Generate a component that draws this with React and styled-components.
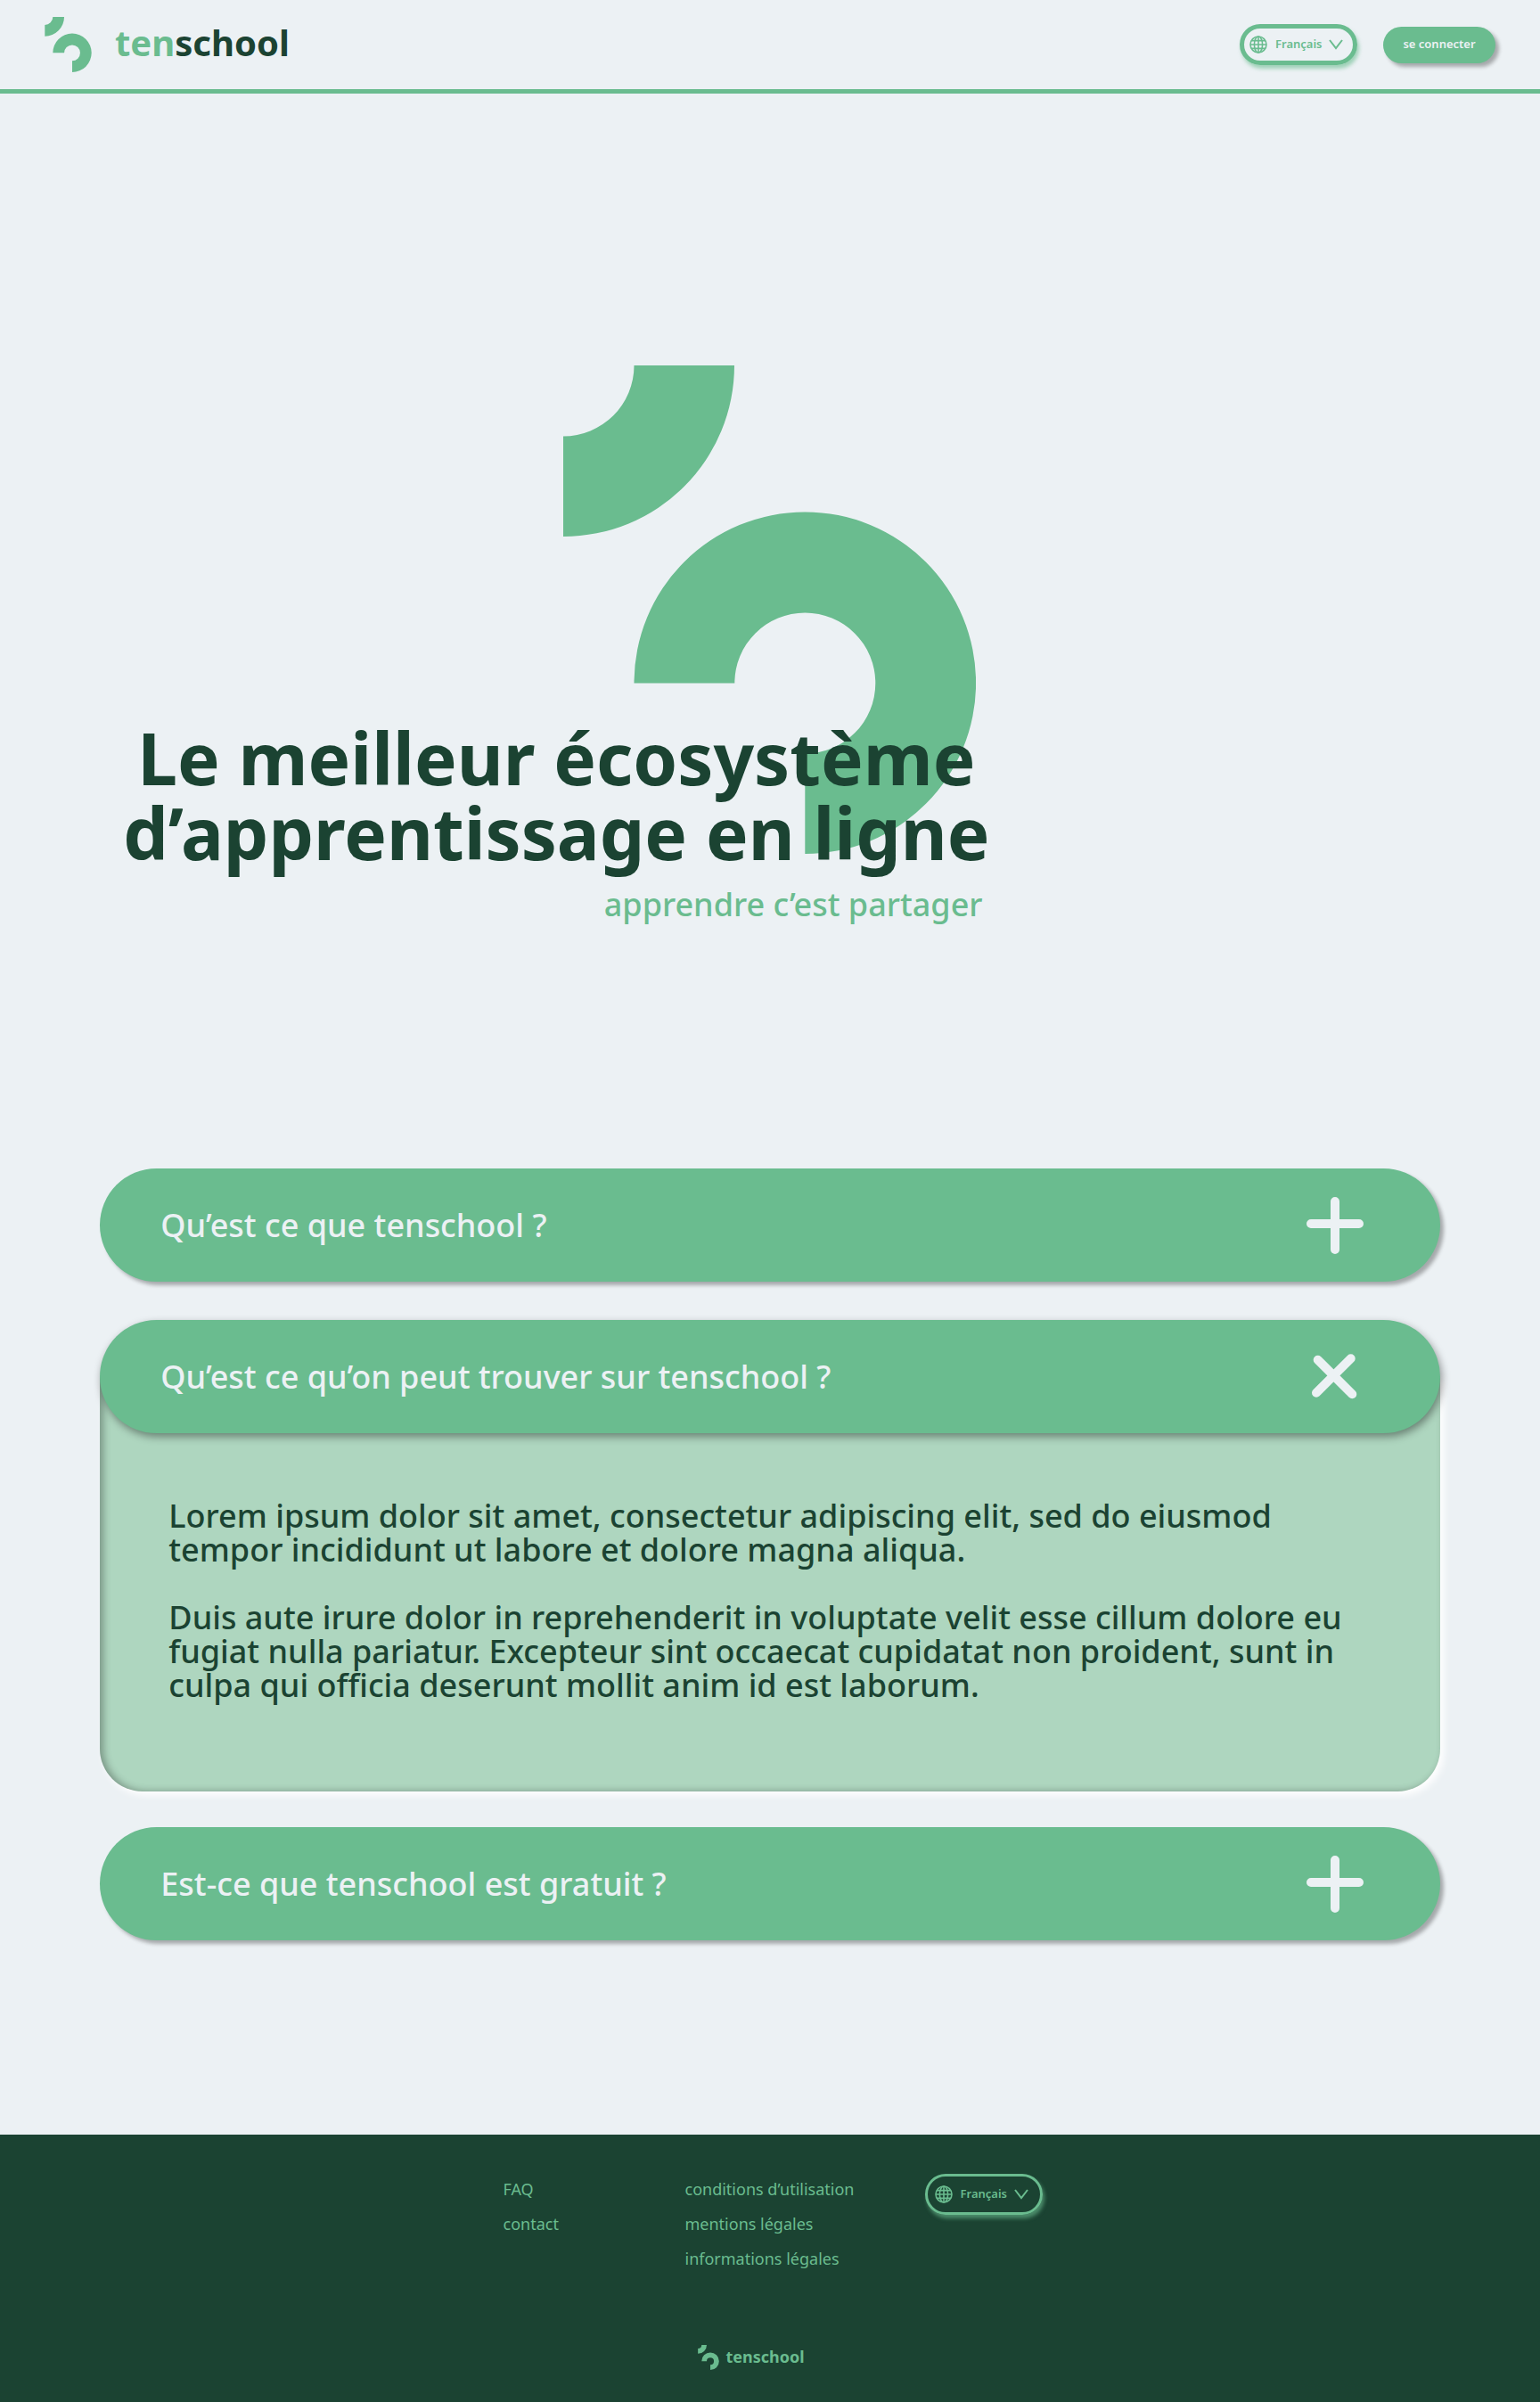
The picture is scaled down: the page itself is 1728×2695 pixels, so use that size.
import React, { useState } from "react";
import styled, { createGlobalStyle } from "styled-components";

const color = {
  page: "#ecf1f4",
  green: "#6abc8f",
  pale: "#aed6bf",
  dark: "#1b4332",
};

const GlobalStyle = createGlobalStyle`
  *, *::before, *::after { box-sizing: border-box; }
  body {
    margin: 0;
    background: ${color.page};
    color: ${color.dark};
    font-family: "Noto Sans", "Open Sans", sans-serif;
  }
  button, select { font-family: inherit; }
`;

/* ---------- shared parts ---------- */

const MarkSvg = styled.svg`
  display: block;
  flex: none;
  fill: ${color.green};
`;

function Mark({ width, height, className }) {
  return (
    <MarkSvg className={className} width={width} height={height} viewBox="0 0 463 548" aria-hidden="true">
      <path d="M79.5 0H192A192 192 0 0 1 0 192V79.5A79.5 79.5 0 0 0 79.5 0Z" />
      <path d="M79.5 356.5A191.8 191.8 0 1 1 271.3 548V435.5A79 79 0 1 0 192.3 356.5Z" />
    </MarkSvg>
  );
}

const Brand = styled.a`
  display: flex;
  align-items: center;
  gap: ${(p) => (p.$small ? 7 : 26)}px;
  color: ${(p) => (p.$small ? color.green : color.dark)};
  font-size: ${(p) => (p.$small ? 18 : 40)}px;
  font-weight: 700;
  line-height: 28px;
  text-decoration: none;
`;

const Wordmark = styled.span`
  padding-bottom: ${(p) => (p.$small ? 2 : 4)}px;
`;

const BrandAccent = styled.span`
  color: ${color.green};
`;

const Pill = styled.label`
  display: flex;
  align-items: center;
  width: 132px;
  height: 46px;
  padding: 0 ${(p) => 16 - p.$line}px 0 ${(p) => 11 - p.$line}px;
  border: ${(p) => p.$line}px solid ${color.green};
  border-radius: 23px;
  box-shadow: 2px 4px 4px rgba(106, 188, 143, 0.6);
  color: ${color.green};
`;

const LanguageSelect = styled.select`
  flex: 1;
  min-width: 0;
  height: 100%;
  margin: 0;
  padding: 0 0 2px 9px;
  appearance: none;
  border: 0;
  outline: 0;
  background: transparent;
  color: inherit;
  font-size: 13px;
  font-weight: 600;
  cursor: pointer;
`;

const PillIcon = styled.svg`
  flex: none;
  fill: none;
  stroke: currentColor;
  stroke-width: 1.6;
  pointer-events: none;
`;

function LanguagePicker({ line }) {
  return (
    <Pill $line={line}>
      <PillIcon width="20" height="20" viewBox="0 0 20 20" aria-hidden="true">
        <circle cx="10" cy="10" r="9" />
        <ellipse cx="10" cy="10" rx="4.6" ry="9" />
        <path d="M10 1v18M1 10h18M2.4 5.6h15.2M2.4 14.4h15.2" />
      </PillIcon>
      <LanguageSelect aria-label="Langue" defaultValue="fr">
        <option value="fr">Français</option>
        <option value="en">English</option>
      </LanguageSelect>
      <PillIcon width="16" height="12" viewBox="0 0 16 12" aria-hidden="true">
        <path d="M1 1l7 9 7-9" strokeWidth="2" />
      </PillIcon>
    </Pill>
  );
}

/* ---------- header ---------- */

const Header = styled.header`
  display: flex;
  align-items: center;
  justify-content: space-between;
  height: 105px;
  padding: 0 50px;
  border-bottom: 5px solid ${color.green};
`;

const HeaderActions = styled.div`
  display: flex;
  align-items: center;
  gap: 29px;
`;

const LoginButton = styled.button`
  height: 41px;
  width: 126px;
  padding: 0 0 2px;
  border: 0;
  border-radius: 21px;
  background: ${color.green};
  box-shadow: 4px 4px 4px rgba(0, 0, 0, 0.3);
  color: ${color.page};
  font-size: 13px;
  font-weight: 600;
  cursor: pointer;
`;

/* ---------- hero ---------- */

const Hero = styled.section`
  display: grid;
  justify-content: start;
  padding: 305px 0 277px 8%;
`;

const HeroMark = styled(Mark)`
  grid-area: 1 / 1;
  margin-left: 494px;
`;

const HeroCopy = styled.div`
  grid-area: 1 / 1;
  z-index: 1;
  display: flex;
  flex-direction: column;
  gap: 20px;
  padding-top: 398px;
`;

const HeroTitle = styled.h1`
  margin: 0;
  font-size: 80px;
  font-weight: 700;
  line-height: 84px;
  text-align: center;
`;

const HeroTagline = styled.p`
  margin: 0;
  padding-right: 8px;
  color: ${color.green};
  font-size: 36px;
  font-weight: 500;
  line-height: 38px;
  text-align: right;
`;

/* ---------- questions ---------- */

const Questions = styled.section`
  width: 87%;
  margin: 0 auto;
  padding-bottom: 218px;
`;

const Question = styled.article`
  &:not(:last-child) {
    margin-bottom: ${(p) => (p.$open ? 40 : 43)}px;
  }
`;

const QuestionHeading = styled.h2`
  margin: 0;
`;

const QuestionButton = styled.button`
  position: relative;
  z-index: 1;
  display: flex;
  align-items: center;
  justify-content: space-between;
  width: 100%;
  height: 127px;
  padding: 0 86px 0 68px;
  border: 0;
  border-radius: 64px;
  background: ${color.green};
  box-shadow: ${(p) =>
    p.$open ? "2px 4px 10px rgba(0, 0, 0, 0.4)" : "4px 4px 4px rgba(0, 0, 0, 0.3)"};
  color: ${color.page};
  font-size: 36px;
  font-weight: 500;
  line-height: 38px;
  text-align: left;
  cursor: pointer;
`;

const ToggleIcon = styled.svg`
  flex: none;
  fill: none;
  stroke: currentColor;
  stroke-width: 10;
  stroke-linecap: round;
`;

const Answer = styled.div`
  display: grid;
  gap: 38px;
  margin-top: -64px;
  padding: 138px 77px 100px;
  border-radius: 0 0 48px 48px;
  background: ${color.pale};
  box-shadow:
    inset 4px 0 8px rgba(0, 0, 0, 0.3),
    4px 4px 8px #ffffff;
  font-size: 36px;
  font-weight: 500;
  line-height: 38px;
`;

const AnswerText = styled.p`
  margin: 0;
`;

const answer = [
  "Lorem ipsum dolor sit amet, consectetur adipiscing elit, sed do eiusmod tempor incididunt ut labore et dolore magna aliqua.",
  "Duis aute irure dolor in reprehenderit in voluptate velit esse cillum dolore eu fugiat nulla pariatur. Excepteur sint occaecat cupidatat non proident, sunt in culpa qui officia deserunt mollit anim id est laborum.",
];

const questions = [
  "Qu’est ce que tenschool ?",
  "Qu’est ce qu’on peut trouver sur tenschool ?",
  "Est-ce que tenschool est gratuit ?",
];

function QuestionItem({ title, open, onToggle }) {
  return (
    <Question $open={open}>
      <QuestionHeading>
        <QuestionButton type="button" $open={open} aria-expanded={open} onClick={onToggle}>
          <span>{title}</span>
          <ToggleIcon width="64" height="64" viewBox="0 0 64 64" aria-hidden="true">
            <path d={open ? "M12.7 12.7l38.6 38.6M49.7 11.3L11 49.7" : "M32 5v54M5 30h54"} />
          </ToggleIcon>
        </QuestionButton>
      </QuestionHeading>
      {open && (
        <Answer>
          {answer.map((text) => (
            <AnswerText key={text}>{text}</AnswerText>
          ))}
        </Answer>
      )}
    </Question>
  );
}

/* ---------- footer ---------- */

const Footer = styled.footer`
  display: flex;
  flex-direction: column;
  align-items: center;
  gap: 76px;
  padding: 42px 0 37px;
  background: ${color.dark};
`;

const FooterColumns = styled.div`
  display: grid;
  grid-template-columns: 204px 269px auto;
  padding-left: 6px;
`;

const LinkList = styled.ul`
  margin: 0;
  padding: 0;
  list-style: none;
  font-size: 18px;
  line-height: 39px;
`;

const FooterLink = styled.a`
  color: ${color.green};
  text-decoration: none;
`;

const FooterLanguage = styled.div`
  padding-top: 2px;
`;

const FooterBrand = styled.div`
  padding-right: 42px;
`;

function Links({ items }) {
  return (
    <LinkList>
      {items.map((item) => (
        <li key={item}>
          <FooterLink href="#">{item}</FooterLink>
        </li>
      ))}
    </LinkList>
  );
}

export default function App() {
  const [openIndex, setOpenIndex] = useState(1);

  return (
    <>
      <GlobalStyle />
      <Header>
        <Brand href="#">
          <Mark width={53} height={62} />
          <Wordmark>
            <BrandAccent>ten</BrandAccent>school
          </Wordmark>
        </Brand>
        <HeaderActions>
          <LanguagePicker line={5} />
          <LoginButton type="button">se connecter</LoginButton>
        </HeaderActions>
      </Header>

      <main>
        <Hero>
          <HeroMark width={463} height={548} />
          <HeroCopy>
            <HeroTitle>
              Le meilleur écosystème
              <br />
              d’apprentissage en ligne
            </HeroTitle>
            <HeroTagline>apprendre c’est partager</HeroTagline>
          </HeroCopy>
        </Hero>

        <Questions>
          {questions.map((title, i) => (
            <QuestionItem
              key={title}
              title={title}
              open={i === openIndex}
              onToggle={() => setOpenIndex(i === openIndex ? -1 : i)}
            />
          ))}
        </Questions>
      </main>

      <Footer>
        <FooterColumns>
          <Links items={["FAQ", "contact"]} />
          <Links items={["conditions d’utilisation", "mentions légales", "informations légales"]} />
          <FooterLanguage>
            <LanguagePicker line={3} />
          </FooterLanguage>
        </FooterColumns>
        <FooterBrand>
          <Brand href="#" $small>
            <Mark width={24} height={28} />
            <Wordmark $small>tenschool</Wordmark>
          </Brand>
        </FooterBrand>
      </Footer>
    </>
  );
}
